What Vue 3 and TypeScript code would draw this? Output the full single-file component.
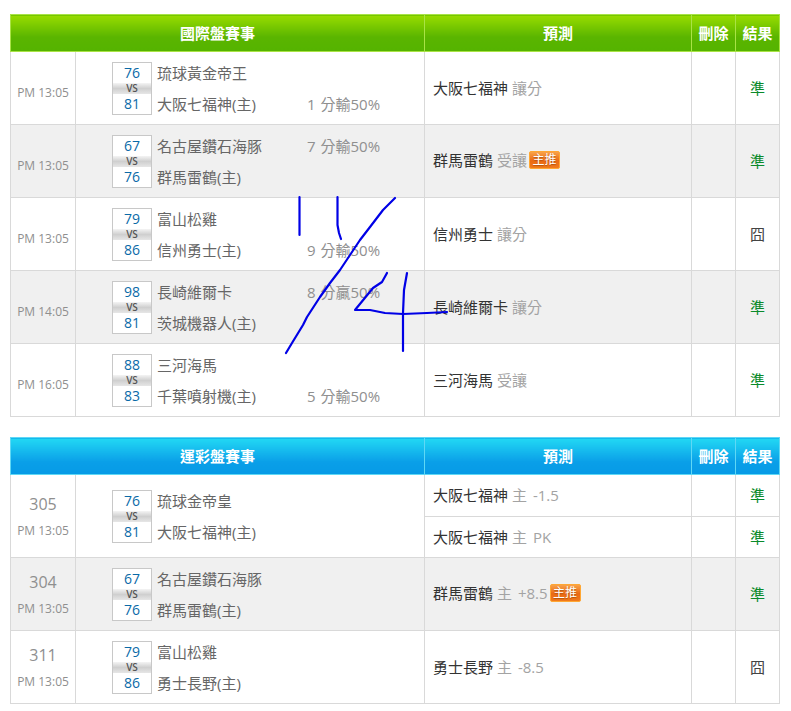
<script setup lang="ts">
interface Pick { team: string; tip: string; badge?: boolean; result: string }
interface Game {
  no?: string; time: string;
  away: string; awayScore: number; awayNote?: string;
  home: string; homeScore: number; homeNote?: string;
  picks: Pick[];
}
const hit = '準';
const miss = '囧';
const intl: Game[] = [
  { time: 'PM 13:05', away: '琉球黃金帝王', awayScore: 76, home: '大阪七福神(主)', homeScore: 81, homeNote: '1 分輸50%', picks: [{ team: '大阪七福神', tip: '讓分', result: hit }] },
  { time: 'PM 13:05', away: '名古屋鑽石海豚', awayScore: 67, awayNote: '7 分輸50%', home: '群馬雷鶴(主)', homeScore: 76, picks: [{ team: '群馬雷鶴', tip: '受讓', badge: true, result: hit }] },
  { time: 'PM 13:05', away: '富山松雞', awayScore: 79, home: '信州勇士(主)', homeScore: 86, homeNote: '9 分輸50%', picks: [{ team: '信州勇士', tip: '讓分', result: miss }] },
  { time: 'PM 14:05', away: '長崎維爾卡', awayScore: 98, awayNote: '8 分贏50%', home: '茨城機器人(主)', homeScore: 81, picks: [{ team: '長崎維爾卡', tip: '讓分', result: hit }] },
  { time: 'PM 16:05', away: '三河海馬', awayScore: 88, home: '千葉噴射機(主)', homeScore: 83, homeNote: '5 分輸50%', picks: [{ team: '三河海馬', tip: '受讓', result: hit }] },
];
const lottery: Game[] = [
  { no: '305', time: 'PM 13:05', away: '琉球金帝皇', awayScore: 76, home: '大阪七福神(主)', homeScore: 81, picks: [{ team: '大阪七福神', tip: '主 -1.5', result: hit }, { team: '大阪七福神', tip: '主 PK', result: hit }] },
  { no: '304', time: 'PM 13:05', away: '名古屋鑽石海豚', awayScore: 67, home: '群馬雷鶴(主)', homeScore: 76, picks: [{ team: '群馬雷鶴', tip: '主 +8.5', badge: true, result: hit }] },
  { no: '311', time: 'PM 13:05', away: '富山松雞', awayScore: 79, home: '勇士長野(主)', homeScore: 86, picks: [{ team: '勇士長野', tip: '主 -8.5', result: miss }] },
];
const sections = [
  { title: '國際盤賽事', theme: 'green', games: intl },
  { title: '運彩盤賽事', theme: 'blue', games: lottery },
];
const strokes = [
  'M299.5 197 L299.5 235',
  'M337.5 197 L337.5 225 L339 233 L341 239',
  'M395 198 L383 210 L370 227 L360 240 L350 255 L340 270 L330 283 L320 297 L307 317 L303 325 L292 343 L286 353',
  'M387 273 L382 282 L373 288 L355 310 L370 310 L385 313 L403 314 L427 313 L447 312',
  'M407 273 L404 290 L403 313 L403 351',
];
</script>

<template>
  <div class="page">
    <table v-for="s in sections" :key="s.title" class="board" :class="s.theme">
      <colgroup>
        <col class="c-time" /><col class="c-match" /><col class="c-pick" /><col class="c-del" /><col class="c-res" />
      </colgroup>
      <thead>
        <tr>
          <th colspan="2">{{ s.title }}</th>
          <th>預測</th>
          <th>刪除</th>
          <th>結果</th>
        </tr>
      </thead>
      <tbody v-for="(g, gi) in s.games" :key="gi" :class="{ alt: gi % 2 === 1 }">
        <tr v-for="(p, pi) in g.picks" :key="pi" :class="g.picks.length > 1 ? (pi === 0 ? 'split-a' : 'split-b') : 'single'">
          <td v-if="pi === 0" :rowspan="g.picks.length" class="time" :class="{ bare: !g.no }">
            <div v-if="g.no" class="no">{{ g.no }}</div>
            <div>{{ g.time }}</div>
          </td>
          <td v-if="pi === 0" :rowspan="g.picks.length" class="match-cell">
            <div class="match">
              <div class="scores">
                <div class="score">{{ g.awayScore }}</div>
                <div class="vs">VS</div>
                <div class="score">{{ g.homeScore }}</div>
              </div>
              <div class="teams">
                <div class="line"><span class="name">{{ g.away }}</span><span class="note">{{ g.awayNote }}</span></div>
                <div class="line"><span class="name">{{ g.home }}</span><span class="note">{{ g.homeNote }}</span></div>
              </div>
            </div>
          </td>
          <td class="pick">
            <span class="team">{{ p.team }}</span>
            <span class="tip">{{ p.tip }}</span>
            <span v-if="p.badge" class="badge">主推</span>
          </td>
          <td></td>
          <td class="result" :class="{ win: p.result === hit }">{{ p.result }}</td>
        </tr>
      </tbody>
    </table>
    <svg class="scribble" width="791" height="711" viewBox="0 0 791 711" fill="none" aria-hidden="true">
      <path v-for="(d, i) in strokes" :key="i" :d="d" stroke="#0000e6" stroke-width="2.2" stroke-linecap="round" stroke-linejoin="round" />
    </svg>
  </div>
</template>

<style>
html, body { margin: 0; background: #fff; }
</style>

<style scoped>
.page {
  position: relative;
  box-sizing: border-box;
  width: 791px;
  height: 711px;
  overflow: hidden;
  padding: 14px 11px 0 10px;
  font-family: "Open Sans", "Noto Sans CJK TC", sans-serif;
  color: #666;
}
.board {
  width: 770px;
  table-layout: fixed;
  border-collapse: collapse;
  margin-bottom: 20px;
  font-size: 15px;
}
.c-time { width: 65px; }
.c-match { width: 349px; }
.c-pick { width: 267px; }
.c-del { width: 44px; }
.c-res { width: 44px; }
th {
  height: 37px;
  padding: 0 0 2px;
  color: #fff;
  font-size: 15px;
  font-weight: 700;
  text-align: center;
  box-sizing: border-box;
}
.green th {
  border: 1px solid #a9e346;
  background: linear-gradient(#98dc00 0, #5ab500 60%, #55b300 100%);
}
.blue th {
  border: 1px solid #5fd8f5;
  background: linear-gradient(#22d8f4 0, #0a9fe8 65%, #069ae6 100%);
}
td {
  border: 1px solid #d9d9d9;
  padding: 0;
  box-sizing: border-box;
}
.alt td { background: #f0f0f0; }
.single { height: 73px; }
.split-a { height: 42px; }
.split-b { height: 41px; }
.time {
  text-align: center;
  font-size: 12px;
  color: #8f8f8f;
  white-space: nowrap;
}
.time.bare { padding-top: 8px; }
.no {
  font-size: 16px;
  line-height: 22px;
  margin-bottom: 7px;
}
.match { display: flex; align-items: center; padding-left: 36px; }
.scores {
  width: 40px;
  box-sizing: border-box;
  border: 1px solid #c8c8c8;
  background: #fff;
  flex: none;
}
.score {
  height: 20px;
  line-height: 20px;
  text-align: center;
  color: #0a6aa8;
  font-size: 14px;
}
.vs {
  height: 11px;
  line-height: 11px;
  text-align: center;
  font-size: 10px;
  font-weight: 600;
  color: #555;
  background: linear-gradient(#f4f4f4, #cfcfcf 50%, #e6e6e6);
}
.teams { margin-left: 5px; display: flex; flex-direction: column; gap: 11px; }
.line { display: flex; height: 20px; line-height: 20px; white-space: nowrap; }
.name { width: 150px; }
.note { color: #8f8f8f; word-spacing: 1px; }
.pick { padding: 0 0 2px 8px; white-space: nowrap; }
.team { color: #333; }
.tip { color: #a3a3a3; margin-left: 4px; word-spacing: 2px; }
.badge {
  display: inline-block;
  position: relative;
  top: -2px;
  width: 31px;
  height: 18px;
  line-height: 15px;
  box-sizing: border-box;
  margin-left: 2px;
  border: 1px solid #ffa733;
  border-radius: 2px;
  background: linear-gradient(#f8a24a, #ea6a14 55%, #f07a1c);
  color: #fff;
  font-size: 12px;
  text-align: center;
  text-shadow: 0 1px 1px rgba(120, 50, 0, .5);
}
.result { padding-bottom: 2px; text-align: center; color: #444; }
.result.win { color: #0a8a2a; }
.scribble { position: absolute; left: 0; top: 0; pointer-events: none; }
</style>
